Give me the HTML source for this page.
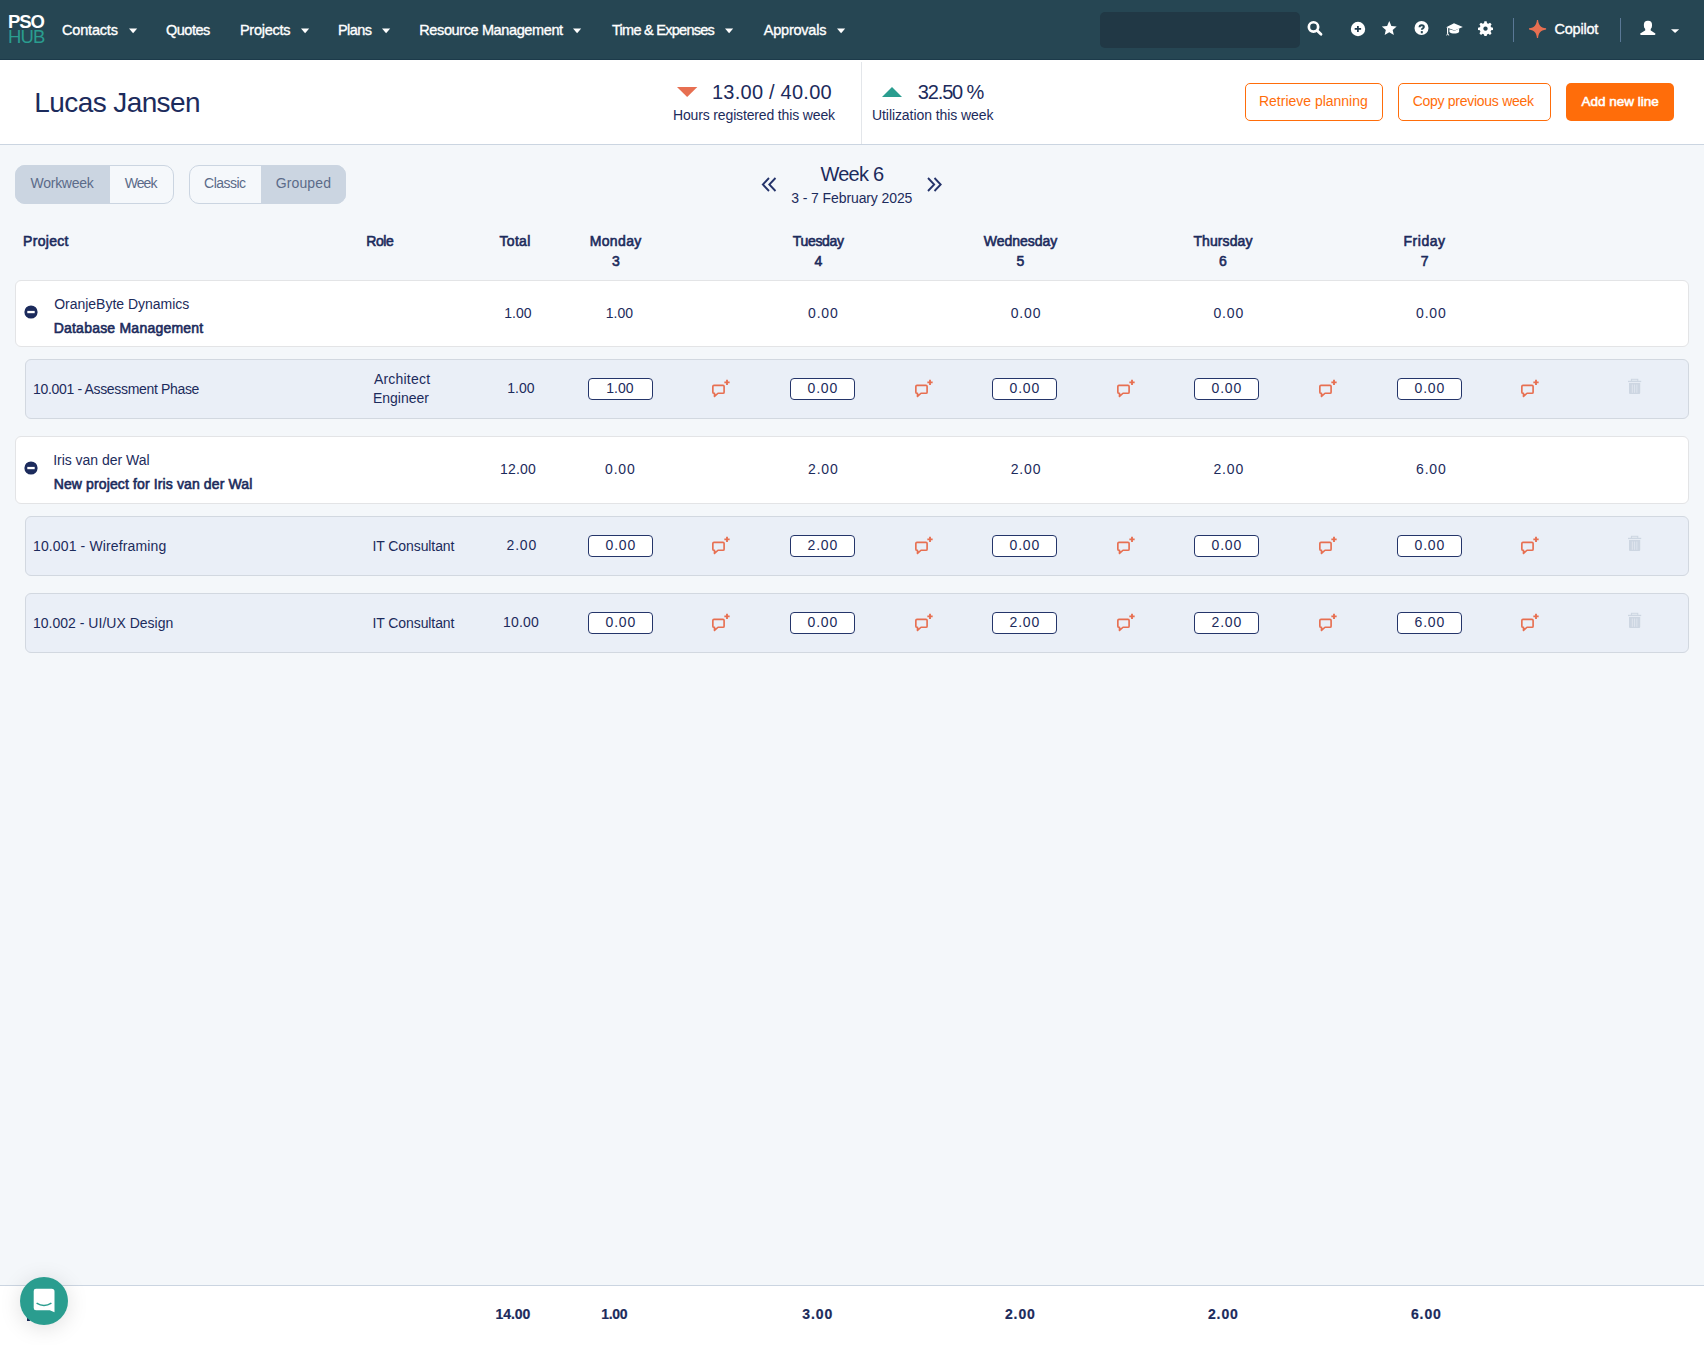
<!DOCTYPE html>
<html><head><meta charset="utf-8"><title>PSO Hub - Timesheet</title>
<style>
html,body{margin:0;padding:0;}
body{width:1704px;height:1345px;position:relative;overflow:hidden;background:#f4f7fa;font-family:"Liberation Sans", sans-serif;}
.t{position:absolute;white-space:nowrap;}
.r{position:absolute;}
svg.r{overflow:visible;}
</style></head><body>
<div class="r" style="left:0px;top:0px;width:1704px;height:59px;background:#264653;"></div>
<div class="r" style="left:0px;top:59px;width:1704px;height:1px;background:#1c3a4a;"></div>
<div class="t" style="left:7.90px;top:13.25px;font-size:18.5px;line-height:18.5px;font-weight:700;color:#ffffff;letter-spacing:-0.989px;">PSO</div>
<div class="t" style="left:7.90px;top:28.45px;font-size:18.5px;line-height:18.5px;font-weight:400;color:#2a9d8f;letter-spacing:-0.810px;">HUB</div>
<div class="t" style="left:61.98px;top:23.15px;font-size:14.5px;line-height:14.5px;font-weight:400;color:#ffffff;letter-spacing:-0.176px;-webkit-text-stroke:0.35px #fff;">Contacts</div>
<svg class="r" style="left:128.6px;top:27.5px" width="9" height="6"><path d="M0 0.5 L8.2 0.5 L4.1 5.3 Z" fill="#fff"/></svg>
<div class="t" style="left:165.98px;top:23.15px;font-size:14.5px;line-height:14.5px;font-weight:400;color:#ffffff;letter-spacing:-0.492px;-webkit-text-stroke:0.35px #fff;">Quotes</div>
<div class="t" style="left:239.88px;top:23.15px;font-size:14.5px;line-height:14.5px;font-weight:400;color:#ffffff;letter-spacing:-0.241px;-webkit-text-stroke:0.35px #fff;">Projects</div>
<svg class="r" style="left:301px;top:27.5px" width="9" height="6"><path d="M0 0.5 L8.2 0.5 L4.1 5.3 Z" fill="#fff"/></svg>
<div class="t" style="left:337.98px;top:23.15px;font-size:14.5px;line-height:14.5px;font-weight:400;color:#ffffff;letter-spacing:-0.570px;-webkit-text-stroke:0.35px #fff;">Plans</div>
<svg class="r" style="left:382px;top:27.5px" width="9" height="6"><path d="M0 0.5 L8.2 0.5 L4.1 5.3 Z" fill="#fff"/></svg>
<div class="t" style="left:419.28px;top:23.15px;font-size:14.5px;line-height:14.5px;font-weight:400;color:#ffffff;letter-spacing:-0.381px;-webkit-text-stroke:0.35px #fff;">Resource Management</div>
<svg class="r" style="left:572.9px;top:27.5px" width="9" height="6"><path d="M0 0.5 L8.2 0.5 L4.1 5.3 Z" fill="#fff"/></svg>
<div class="t" style="left:611.98px;top:23.15px;font-size:14.5px;line-height:14.5px;font-weight:400;color:#ffffff;letter-spacing:-0.729px;-webkit-text-stroke:0.35px #fff;">Time &amp; Expenses</div>
<svg class="r" style="left:725.4px;top:27.5px" width="9" height="6"><path d="M0 0.5 L8.2 0.5 L4.1 5.3 Z" fill="#fff"/></svg>
<div class="t" style="left:763.78px;top:23.15px;font-size:14.5px;line-height:14.5px;font-weight:400;color:#ffffff;letter-spacing:-0.224px;-webkit-text-stroke:0.35px #fff;">Approvals</div>
<svg class="r" style="left:837px;top:27.5px" width="9" height="6"><path d="M0 0.5 L8.2 0.5 L4.1 5.3 Z" fill="#fff"/></svg>
<div class="r" style="left:1100px;top:12px;width:200px;height:35.6px;background:#213845;border-radius:5px;"></div>
<svg class="r" style="left:1305px;top:19px" width="20" height="19" viewBox="0 0 20 19"><circle cx="8.5" cy="7.9" r="4.65" fill="none" stroke="#fff" stroke-width="2.7"/><path d="M12.1 11.5 L16.0 15.3" stroke="#fff" stroke-width="2.8" stroke-linecap="round"/></svg>
<svg class="r" style="left:1350px;top:21px" width="16" height="16" viewBox="0 0 16 16"><circle cx="8" cy="8" r="7.2" fill="#fff"/><path d="M7.9 4.9 V11 M4.7 7.95 H11.1" stroke="#1f3a4c" stroke-width="1.75"/></svg>
<svg class="r" style="left:1381.2px;top:20.3px" width="16.5" height="16" viewBox="0 0 24 23.3"><path d="M12 1.5 L15.1 8.6 L22.8 9.3 L17 14.4 L18.7 22 L12 18 L5.3 22 L7 14.4 L1.2 9.3 L8.9 8.6 Z" fill="#fff"/></svg>
<svg class="r" style="left:1414px;top:20.5px" width="16" height="15" viewBox="0 0 16 15"><circle cx="7.5" cy="7" r="7" fill="#fff"/><path d="M5.5 6.3 C5.5 4.9 6.4 4.2 7.7 4.2 C9.1 4.2 9.9 5 9.9 6 C9.9 7.3 7.9 7.4 7.8 8.7" fill="none" stroke="#264653" stroke-width="1.9"/><rect x="6.8" y="10.1" width="2" height="2.2" fill="#264653"/></svg>
<svg class="r" style="left:1446px;top:22.5px" width="17" height="13" viewBox="0 0 17 13"><path d="M0.2 4.3 L8 0.3 L16.8 3.9 L8.6 7.6 Z" fill="#fff"/><path d="M3.4 6.2 L3.4 9 C5.5 11 11 11 13.1 9 L13.1 5.6 L8.6 7.8 Z" fill="#fff"/><path d="M1.6 4.8 L1.6 10.2" stroke="#fff" stroke-width="1.2"/><path d="M0.2 12.5 L1.6 9.6 L3.4 12.5 L2.4 12.5 L1.6 11.2 L1.0 12.5 Z" fill="#fff"/></svg>
<svg class="r" style="left:1478px;top:20.5px" width="15" height="15" viewBox="0 0 16 16"><path fill="#fff" fill-rule="evenodd" d="M6.8 0.3 H9.2 L9.6 2.3 L11.1 2.9 L12.8 1.8 L14.5 3.5 L13.4 5.2 L14 6.7 L16 7.1 V9.5 L14 9.9 L13.4 11.4 L14.5 13.1 L12.8 14.8 L11.1 13.7 L9.6 14.3 L9.2 16 H6.8 L6.4 14.3 L4.9 13.7 L3.2 14.8 L1.5 13.1 L2.6 11.4 L2 9.9 L0 9.5 V7.1 L2 6.7 L2.6 5.2 L1.5 3.5 L3.2 1.8 L4.9 2.9 L6.4 2.3 Z M8 5.9 A2.3 2.3 0 1 0 8.001 5.9 Z"/></svg>
<div class="r" style="left:1513px;top:18px;width:1.3px;height:24px;background:#5a7896;"></div>
<div class="r" style="left:1620px;top:18px;width:1.3px;height:24px;background:#5a7896;"></div>
<svg class="r" style="left:1529px;top:20px" width="18" height="19" viewBox="0 0 18 19"><path d="M7.95 0 L9.05 0 C9.6 5 11.3 7.5 17.1 8.35 L17.1 9.45 C11.3 10.3 9.6 12.9 9.05 17.9 L7.95 17.9 C7.4 12.9 5.7 10.3 0 9.45 L0 8.35 C5.7 7.5 7.4 5 7.95 0 Z" fill="#e76f51"/></svg>
<div class="t" style="left:1554.48px;top:21.75px;font-size:14.5px;line-height:14.5px;font-weight:400;color:#ffffff;letter-spacing:-0.211px;-webkit-text-stroke:0.35px #fff;">Copilot</div>
<svg class="r" style="left:1640px;top:21px" width="16" height="14" viewBox="0 0 16 14"><rect x="3.9" y="-0.3" width="8.1" height="8.9" rx="3.8" fill="#fff"/><rect x="5.2" y="7" width="5.5" height="3" fill="#fff"/><path d="M0.2 12.6 L5.1 9.4 L10.8 9.4 L15.4 12.6 Q15.7 14 14.6 14 L1 14 Q-0.1 14 0.2 12.6 Z" fill="#fff"/></svg>
<svg class="r" style="left:1670.8px;top:29.2px" width="9" height="5"><path d="M0 0.2 L8.2 0.2 L4.1 3.9 Z" fill="#fff"/></svg>
<div class="r" style="left:0px;top:60px;width:1704px;height:84px;background:#ffffff;"></div>
<div class="r" style="left:0px;top:144px;width:1704px;height:1px;background:#cbd5e1;"></div>
<div class="t" style="left:34.30px;top:88.50px;font-size:28px;line-height:28px;font-weight:400;color:#1c2b5c;letter-spacing:-0.592px;">Lucas Jansen</div>
<svg class="r" style="left:677px;top:87px" width="21" height="11"><path d="M0 0 L20.3 0 L10.15 10 Z" fill="#e76f51"/></svg>
<div class="t" style="left:712.00px;top:82.00px;font-size:20px;line-height:20px;font-weight:400;color:#1c2b5c;letter-spacing:0.238px;">13.00 / 40.00</div>
<div class="t" style="left:673.00px;top:108.00px;font-size:14px;line-height:14px;font-weight:400;color:#1c2b5c;letter-spacing:-0.149px;">Hours registered this week</div>
<div class="r" style="left:860.5px;top:62px;width:1.2px;height:82px;background:#e3e6ea;"></div>
<svg class="r" style="left:882px;top:87px" width="21" height="11"><path d="M0 10 L20 10 L10 0 Z" fill="#2a9d8f"/></svg>
<div class="t" style="left:917.80px;top:82.00px;font-size:20px;line-height:20px;font-weight:400;color:#1c2b5c;letter-spacing:-1.151px;">32.50 %</div>
<div class="t" style="left:872.00px;top:108.00px;font-size:14px;line-height:14px;font-weight:400;color:#1c2b5c;letter-spacing:-0.077px;">Utilization this week</div>
<div class="r" style="left:1245px;top:83px;width:138px;height:37.5px;box-sizing:border-box;border:1.3px solid #ff6d0a;border-radius:5px;background:#fff;"></div>
<div class="t" style="left:1259.00px;top:94.20px;font-size:14px;line-height:14px;font-weight:400;color:#ff6d0a;letter-spacing:-0.011px;">Retrieve planning</div>
<div class="r" style="left:1398px;top:83px;width:153px;height:37.5px;box-sizing:border-box;border:1.3px solid #ff6d0a;border-radius:5px;background:#fff;"></div>
<div class="t" style="left:1412.70px;top:94.20px;font-size:14px;line-height:14px;font-weight:400;color:#ff6d0a;letter-spacing:-0.280px;">Copy previous week</div>
<div class="r" style="left:1566px;top:83px;width:108px;height:37.5px;border-radius:5px;background:#ff6d0a;"></div>
<div class="t" style="left:1581.44px;top:94.95px;font-size:13.5px;line-height:13.5px;font-weight:400;color:#ffffff;letter-spacing:-0.007px;-webkit-text-stroke:0.55px #fff;">Add new line</div>
<div class="r" style="left:15px;top:165px;width:159px;height:38.7px;box-sizing:border-box;border:1.2px solid #cbd5e1;border-radius:10px;background:#f5f8fb;"></div>
<div class="r" style="left:15px;top:165px;width:95px;height:38.7px;background:#cbd5e1;border-radius:10px 0 0 10px;"></div>
<div class="t" style="left:30.60px;top:176.40px;font-size:14px;line-height:14px;font-weight:400;color:#5b6b89;letter-spacing:-0.285px;">Workweek</div>
<div class="t" style="left:124.70px;top:176.40px;font-size:14px;line-height:14px;font-weight:400;color:#5b6b89;letter-spacing:-0.911px;">Week</div>
<div class="r" style="left:189px;top:165px;width:157px;height:38.7px;box-sizing:border-box;border:1.2px solid #cbd5e1;border-radius:10px;background:#f5f8fb;"></div>
<div class="r" style="left:261px;top:165px;width:85px;height:38.7px;background:#cbd5e1;border-radius:0 10px 10px 0;"></div>
<div class="t" style="left:204.10px;top:176.40px;font-size:14px;line-height:14px;font-weight:400;color:#5b6b89;letter-spacing:-0.520px;">Classic</div>
<div class="t" style="left:275.70px;top:176.40px;font-size:14px;line-height:14px;font-weight:400;color:#5b6b89;letter-spacing:0.134px;">Grouped</div>
<svg class="r" style="left:761.3px;top:176.6px" width="17" height="16" viewBox="0 0 17 16"><path d="M8 1 L1.8 7.5 L8 14 M14.5 1 L8.3 7.5 L14.5 14" fill="none" stroke="#24336a" stroke-width="1.85"/></svg>
<svg class="r" style="left:925.9px;top:176.6px" width="17" height="16" viewBox="0 0 17 16"><path d="M2 1 L8.2 7.5 L2 14 M8.5 1 L14.7 7.5 L8.5 14" fill="none" stroke="#24336a" stroke-width="1.85"/></svg>
<div class="t" style="left:820.40px;top:163.60px;font-size:20px;line-height:20px;font-weight:400;color:#1c2b5c;letter-spacing:-0.744px;">Week 6</div>
<div class="t" style="left:791.30px;top:190.90px;font-size:14px;line-height:14px;font-weight:400;color:#1c2b5c;letter-spacing:-0.104px;">3 - 7 February 2025</div>
<div class="t" style="left:23.08px;top:234.00px;font-size:14px;line-height:14px;font-weight:400;color:#1c2b5c;letter-spacing:0.293px;-webkit-text-stroke:0.6px #1c2b5c;">Project</div>
<div class="t" style="left:366.18px;top:234.00px;font-size:14px;line-height:14px;font-weight:400;color:#1c2b5c;letter-spacing:-0.389px;-webkit-text-stroke:0.6px #1c2b5c;">Role</div>
<div class="t" style="left:499.48px;top:234.00px;font-size:14px;line-height:14px;font-weight:400;color:#1c2b5c;letter-spacing:0.320px;-webkit-text-stroke:0.6px #1c2b5c;">Total</div>
<div class="t" style="left:589.63px;top:234.00px;font-size:14px;line-height:14px;font-weight:400;color:#1c2b5c;letter-spacing:0.387px;-webkit-text-stroke:0.6px #1c2b5c;">Monday</div>
<div class="t" style="left:612.00px;top:254.00px;font-size:14px;line-height:14px;font-weight:400;color:#1c2b5c;-webkit-text-stroke:0.6px #1c2b5c;">3</div>
<div class="t" style="left:792.78px;top:234.00px;font-size:14px;line-height:14px;font-weight:400;color:#1c2b5c;letter-spacing:-0.323px;-webkit-text-stroke:0.6px #1c2b5c;">Tuesday</div>
<div class="t" style="left:814.40px;top:254.00px;font-size:14px;line-height:14px;font-weight:400;color:#1c2b5c;-webkit-text-stroke:0.6px #1c2b5c;">4</div>
<div class="t" style="left:983.83px;top:234.00px;font-size:14px;line-height:14px;font-weight:400;color:#1c2b5c;letter-spacing:-0.042px;-webkit-text-stroke:0.6px #1c2b5c;">Wednesday</div>
<div class="t" style="left:1016.50px;top:254.00px;font-size:14px;line-height:14px;font-weight:400;color:#1c2b5c;-webkit-text-stroke:0.6px #1c2b5c;">5</div>
<div class="t" style="left:1193.38px;top:234.00px;font-size:14px;line-height:14px;font-weight:400;color:#1c2b5c;letter-spacing:0.097px;-webkit-text-stroke:0.6px #1c2b5c;">Thursday</div>
<div class="t" style="left:1218.90px;top:254.00px;font-size:14px;line-height:14px;font-weight:400;color:#1c2b5c;-webkit-text-stroke:0.6px #1c2b5c;">6</div>
<div class="t" style="left:1403.48px;top:234.00px;font-size:14px;line-height:14px;font-weight:400;color:#1c2b5c;letter-spacing:0.549px;-webkit-text-stroke:0.6px #1c2b5c;">Friday</div>
<div class="t" style="left:1420.80px;top:254.00px;font-size:14px;line-height:14px;font-weight:400;color:#1c2b5c;-webkit-text-stroke:0.6px #1c2b5c;">7</div>
<div class="r" style="left:15px;top:280px;width:1674px;height:67px;box-sizing:border-box;border:1px solid #e3e4e6;border-radius:6px;background:#fff;"></div>
<svg class="r" style="left:24px;top:304.8px" width="14" height="14" viewBox="0 0 14 14"><circle cx="7" cy="7" r="6.6" fill="#1c2b5c"/><rect x="3.3" y="5.9" width="7.4" height="2.3" fill="#fff"/></svg>
<div class="t" style="left:54.20px;top:296.50px;font-size:14px;line-height:14px;font-weight:400;color:#1c2b5c;letter-spacing:-0.015px;">OranjeByte Dynamics</div>
<div class="t" style="left:53.68px;top:321.20px;font-size:14px;line-height:14px;font-weight:400;color:#1c2b5c;letter-spacing:0.222px;-webkit-text-stroke:0.6px #1c2b5c;">Database Management</div>
<div class="t" style="left:504.35px;top:306.00px;font-size:14px;line-height:14px;font-weight:400;color:#1c2b5c;letter-spacing:-0.054px;">1.00</div>
<div class="t" style="left:605.85px;top:306.00px;font-size:14px;line-height:14px;font-weight:400;color:#1c2b5c;letter-spacing:-0.054px;">1.00</div>
<div class="t" style="left:808.00px;top:306.00px;font-size:14px;line-height:14px;font-weight:400;color:#1c2b5c;letter-spacing:0.846px;">0.00</div>
<div class="t" style="left:1010.70px;top:306.00px;font-size:14px;line-height:14px;font-weight:400;color:#1c2b5c;letter-spacing:0.846px;">0.00</div>
<div class="t" style="left:1213.40px;top:306.00px;font-size:14px;line-height:14px;font-weight:400;color:#1c2b5c;letter-spacing:0.846px;">0.00</div>
<div class="t" style="left:1416.00px;top:306.00px;font-size:14px;line-height:14px;font-weight:400;color:#1c2b5c;letter-spacing:0.846px;">0.00</div>
<div class="r" style="left:25px;top:359px;width:1664px;height:60px;box-sizing:border-box;border:1px solid #d2d8e0;border-radius:6px;background:#eaeff7;"></div>
<div class="t" style="left:33.00px;top:381.60px;font-size:14px;line-height:14px;font-weight:400;color:#1c2b5c;letter-spacing:-0.330px;">10.001 - Assessment Phase</div>
<div class="t" style="left:373.90px;top:371.80px;font-size:14px;line-height:14px;font-weight:400;color:#1c2b5c;letter-spacing:0.216px;">Architect</div>
<div class="t" style="left:372.90px;top:390.80px;font-size:14px;line-height:14px;font-weight:400;color:#1c2b5c;">Engineer</div>
<div class="t" style="left:507.35px;top:380.90px;font-size:14px;line-height:14px;font-weight:400;color:#1c2b5c;letter-spacing:-0.054px;">1.00</div>
<div class="r" style="left:588px;top:378px;width:65px;height:22px;box-sizing:border-box;border:1.3px solid #24356a;border-radius:4px;background:#fff;"></div>
<div class="t" style="left:606.35px;top:380.90px;font-size:14px;line-height:14px;font-weight:400;color:#1c2b5c;letter-spacing:-0.054px;">1.00</div>
<svg class="r" style="left:712px;top:378.5px" width="20" height="19" viewBox="0 0 20 19"><path d="M2 6.4 H11 Q12.1 6.4 12.1 7.5 V13.2 Q12.1 14.25 11 14.25 H6 L2.5 17.4 L2.5 14.25 H2 Q0.85 14.25 0.85 13.2 V7.5 Q0.85 6.4 2 6.4 Z" fill="none" stroke="#e76f51" stroke-width="1.65" stroke-linejoin="round"/><path d="M15 0.75 V6.05 M12.35 3.4 H17.65" stroke="#e76f51" stroke-width="1.85"/></svg>
<div class="r" style="left:790px;top:378px;width:65px;height:22px;box-sizing:border-box;border:1.3px solid #24356a;border-radius:4px;background:#fff;"></div>
<div class="t" style="left:807.50px;top:380.90px;font-size:14px;line-height:14px;font-weight:400;color:#1c2b5c;letter-spacing:0.846px;">0.00</div>
<svg class="r" style="left:915px;top:378.5px" width="20" height="19" viewBox="0 0 20 19"><path d="M2 6.4 H11 Q12.1 6.4 12.1 7.5 V13.2 Q12.1 14.25 11 14.25 H6 L2.5 17.4 L2.5 14.25 H2 Q0.85 14.25 0.85 13.2 V7.5 Q0.85 6.4 2 6.4 Z" fill="none" stroke="#e76f51" stroke-width="1.65" stroke-linejoin="round"/><path d="M15 0.75 V6.05 M12.35 3.4 H17.65" stroke="#e76f51" stroke-width="1.85"/></svg>
<div class="r" style="left:992px;top:378px;width:65px;height:22px;box-sizing:border-box;border:1.3px solid #24356a;border-radius:4px;background:#fff;"></div>
<div class="t" style="left:1009.50px;top:380.90px;font-size:14px;line-height:14px;font-weight:400;color:#1c2b5c;letter-spacing:0.846px;">0.00</div>
<svg class="r" style="left:1117px;top:378.5px" width="20" height="19" viewBox="0 0 20 19"><path d="M2 6.4 H11 Q12.1 6.4 12.1 7.5 V13.2 Q12.1 14.25 11 14.25 H6 L2.5 17.4 L2.5 14.25 H2 Q0.85 14.25 0.85 13.2 V7.5 Q0.85 6.4 2 6.4 Z" fill="none" stroke="#e76f51" stroke-width="1.65" stroke-linejoin="round"/><path d="M15 0.75 V6.05 M12.35 3.4 H17.65" stroke="#e76f51" stroke-width="1.85"/></svg>
<div class="r" style="left:1194px;top:378px;width:65px;height:22px;box-sizing:border-box;border:1.3px solid #24356a;border-radius:4px;background:#fff;"></div>
<div class="t" style="left:1211.50px;top:380.90px;font-size:14px;line-height:14px;font-weight:400;color:#1c2b5c;letter-spacing:0.846px;">0.00</div>
<svg class="r" style="left:1319px;top:378.5px" width="20" height="19" viewBox="0 0 20 19"><path d="M2 6.4 H11 Q12.1 6.4 12.1 7.5 V13.2 Q12.1 14.25 11 14.25 H6 L2.5 17.4 L2.5 14.25 H2 Q0.85 14.25 0.85 13.2 V7.5 Q0.85 6.4 2 6.4 Z" fill="none" stroke="#e76f51" stroke-width="1.65" stroke-linejoin="round"/><path d="M15 0.75 V6.05 M12.35 3.4 H17.65" stroke="#e76f51" stroke-width="1.85"/></svg>
<div class="r" style="left:1397px;top:378px;width:65px;height:22px;box-sizing:border-box;border:1.3px solid #24356a;border-radius:4px;background:#fff;"></div>
<div class="t" style="left:1414.50px;top:380.90px;font-size:14px;line-height:14px;font-weight:400;color:#1c2b5c;letter-spacing:0.846px;">0.00</div>
<svg class="r" style="left:1521px;top:378.5px" width="20" height="19" viewBox="0 0 20 19"><path d="M2 6.4 H11 Q12.1 6.4 12.1 7.5 V13.2 Q12.1 14.25 11 14.25 H6 L2.5 17.4 L2.5 14.25 H2 Q0.85 14.25 0.85 13.2 V7.5 Q0.85 6.4 2 6.4 Z" fill="none" stroke="#e76f51" stroke-width="1.65" stroke-linejoin="round"/><path d="M15 0.75 V6.05 M12.35 3.4 H17.65" stroke="#e76f51" stroke-width="1.85"/></svg>
<svg class="r" style="left:1627.5px;top:378.5px" width="14" height="16" viewBox="0 0 14 16"><rect x="3.4" y="0.3" width="6.4" height="2" fill="none" stroke="#cdd6e2" stroke-width="1"/><rect x="0" y="1.8" width="13.2" height="1.3" fill="#cdd6e2"/><path d="M1 4 H12.2 V14 Q12.2 15 11.2 15 H2 Q1 15 1 14 Z" fill="#cdd6e2"/><path d="M4.3 5.5 V13.8 M6.6 5.5 V13.8 M8.9 5.5 V13.8" stroke="#e4e9f1" stroke-width="0.8"/></svg>
<div class="r" style="left:15px;top:436px;width:1674px;height:68px;box-sizing:border-box;border:1px solid #e3e4e6;border-radius:6px;background:#fff;"></div>
<svg class="r" style="left:24px;top:460.8px" width="14" height="14" viewBox="0 0 14 14"><circle cx="7" cy="7" r="6.6" fill="#1c2b5c"/><rect x="3.3" y="5.9" width="7.4" height="2.3" fill="#fff"/></svg>
<div class="t" style="left:53.20px;top:452.50px;font-size:14px;line-height:14px;font-weight:400;color:#1c2b5c;letter-spacing:-0.028px;">Iris van der Wal</div>
<div class="t" style="left:53.68px;top:477.20px;font-size:14px;line-height:14px;font-weight:400;color:#1c2b5c;letter-spacing:0.125px;-webkit-text-stroke:0.6px #1c2b5c;">New project for Iris van der Wal</div>
<div class="t" style="left:500.00px;top:462.00px;font-size:14px;line-height:14px;font-weight:400;color:#1c2b5c;letter-spacing:0.188px;">12.00</div>
<div class="t" style="left:605.00px;top:462.00px;font-size:14px;line-height:14px;font-weight:400;color:#1c2b5c;letter-spacing:0.846px;">0.00</div>
<div class="t" style="left:808.00px;top:462.00px;font-size:14px;line-height:14px;font-weight:400;color:#1c2b5c;letter-spacing:0.846px;">2.00</div>
<div class="t" style="left:1010.70px;top:462.00px;font-size:14px;line-height:14px;font-weight:400;color:#1c2b5c;letter-spacing:0.846px;">2.00</div>
<div class="t" style="left:1213.40px;top:462.00px;font-size:14px;line-height:14px;font-weight:400;color:#1c2b5c;letter-spacing:0.846px;">2.00</div>
<div class="t" style="left:1416.00px;top:462.00px;font-size:14px;line-height:14px;font-weight:400;color:#1c2b5c;letter-spacing:0.846px;">6.00</div>
<div class="r" style="left:25px;top:516px;width:1664px;height:60px;box-sizing:border-box;border:1px solid #d2d8e0;border-radius:6px;background:#eaeff7;"></div>
<div class="t" style="left:33.00px;top:538.60px;font-size:14px;line-height:14px;font-weight:400;color:#1c2b5c;letter-spacing:0.130px;">10.001 - Wireframing</div>
<div class="t" style="left:372.50px;top:538.60px;font-size:14px;line-height:14px;font-weight:400;color:#1c2b5c;letter-spacing:-0.089px;">IT Consultant</div>
<div class="t" style="left:506.50px;top:537.90px;font-size:14px;line-height:14px;font-weight:400;color:#1c2b5c;letter-spacing:0.846px;">2.00</div>
<div class="r" style="left:588px;top:535px;width:65px;height:22px;box-sizing:border-box;border:1.3px solid #24356a;border-radius:4px;background:#fff;"></div>
<div class="t" style="left:605.50px;top:537.90px;font-size:14px;line-height:14px;font-weight:400;color:#1c2b5c;letter-spacing:0.846px;">0.00</div>
<svg class="r" style="left:712px;top:535.5px" width="20" height="19" viewBox="0 0 20 19"><path d="M2 6.4 H11 Q12.1 6.4 12.1 7.5 V13.2 Q12.1 14.25 11 14.25 H6 L2.5 17.4 L2.5 14.25 H2 Q0.85 14.25 0.85 13.2 V7.5 Q0.85 6.4 2 6.4 Z" fill="none" stroke="#e76f51" stroke-width="1.65" stroke-linejoin="round"/><path d="M15 0.75 V6.05 M12.35 3.4 H17.65" stroke="#e76f51" stroke-width="1.85"/></svg>
<div class="r" style="left:790px;top:535px;width:65px;height:22px;box-sizing:border-box;border:1.3px solid #24356a;border-radius:4px;background:#fff;"></div>
<div class="t" style="left:807.50px;top:537.90px;font-size:14px;line-height:14px;font-weight:400;color:#1c2b5c;letter-spacing:0.846px;">2.00</div>
<svg class="r" style="left:915px;top:535.5px" width="20" height="19" viewBox="0 0 20 19"><path d="M2 6.4 H11 Q12.1 6.4 12.1 7.5 V13.2 Q12.1 14.25 11 14.25 H6 L2.5 17.4 L2.5 14.25 H2 Q0.85 14.25 0.85 13.2 V7.5 Q0.85 6.4 2 6.4 Z" fill="none" stroke="#e76f51" stroke-width="1.65" stroke-linejoin="round"/><path d="M15 0.75 V6.05 M12.35 3.4 H17.65" stroke="#e76f51" stroke-width="1.85"/></svg>
<div class="r" style="left:992px;top:535px;width:65px;height:22px;box-sizing:border-box;border:1.3px solid #24356a;border-radius:4px;background:#fff;"></div>
<div class="t" style="left:1009.50px;top:537.90px;font-size:14px;line-height:14px;font-weight:400;color:#1c2b5c;letter-spacing:0.846px;">0.00</div>
<svg class="r" style="left:1117px;top:535.5px" width="20" height="19" viewBox="0 0 20 19"><path d="M2 6.4 H11 Q12.1 6.4 12.1 7.5 V13.2 Q12.1 14.25 11 14.25 H6 L2.5 17.4 L2.5 14.25 H2 Q0.85 14.25 0.85 13.2 V7.5 Q0.85 6.4 2 6.4 Z" fill="none" stroke="#e76f51" stroke-width="1.65" stroke-linejoin="round"/><path d="M15 0.75 V6.05 M12.35 3.4 H17.65" stroke="#e76f51" stroke-width="1.85"/></svg>
<div class="r" style="left:1194px;top:535px;width:65px;height:22px;box-sizing:border-box;border:1.3px solid #24356a;border-radius:4px;background:#fff;"></div>
<div class="t" style="left:1211.50px;top:537.90px;font-size:14px;line-height:14px;font-weight:400;color:#1c2b5c;letter-spacing:0.846px;">0.00</div>
<svg class="r" style="left:1319px;top:535.5px" width="20" height="19" viewBox="0 0 20 19"><path d="M2 6.4 H11 Q12.1 6.4 12.1 7.5 V13.2 Q12.1 14.25 11 14.25 H6 L2.5 17.4 L2.5 14.25 H2 Q0.85 14.25 0.85 13.2 V7.5 Q0.85 6.4 2 6.4 Z" fill="none" stroke="#e76f51" stroke-width="1.65" stroke-linejoin="round"/><path d="M15 0.75 V6.05 M12.35 3.4 H17.65" stroke="#e76f51" stroke-width="1.85"/></svg>
<div class="r" style="left:1397px;top:535px;width:65px;height:22px;box-sizing:border-box;border:1.3px solid #24356a;border-radius:4px;background:#fff;"></div>
<div class="t" style="left:1414.50px;top:537.90px;font-size:14px;line-height:14px;font-weight:400;color:#1c2b5c;letter-spacing:0.846px;">0.00</div>
<svg class="r" style="left:1521px;top:535.5px" width="20" height="19" viewBox="0 0 20 19"><path d="M2 6.4 H11 Q12.1 6.4 12.1 7.5 V13.2 Q12.1 14.25 11 14.25 H6 L2.5 17.4 L2.5 14.25 H2 Q0.85 14.25 0.85 13.2 V7.5 Q0.85 6.4 2 6.4 Z" fill="none" stroke="#e76f51" stroke-width="1.65" stroke-linejoin="round"/><path d="M15 0.75 V6.05 M12.35 3.4 H17.65" stroke="#e76f51" stroke-width="1.85"/></svg>
<svg class="r" style="left:1627.5px;top:535.5px" width="14" height="16" viewBox="0 0 14 16"><rect x="3.4" y="0.3" width="6.4" height="2" fill="none" stroke="#cdd6e2" stroke-width="1"/><rect x="0" y="1.8" width="13.2" height="1.3" fill="#cdd6e2"/><path d="M1 4 H12.2 V14 Q12.2 15 11.2 15 H2 Q1 15 1 14 Z" fill="#cdd6e2"/><path d="M4.3 5.5 V13.8 M6.6 5.5 V13.8 M8.9 5.5 V13.8" stroke="#e4e9f1" stroke-width="0.8"/></svg>
<div class="r" style="left:25px;top:593px;width:1664px;height:60px;box-sizing:border-box;border:1px solid #d2d8e0;border-radius:6px;background:#eaeff7;"></div>
<div class="t" style="left:33.00px;top:615.60px;font-size:14px;line-height:14px;font-weight:400;color:#1c2b5c;letter-spacing:0.011px;">10.002 - UI/UX Design</div>
<div class="t" style="left:372.50px;top:615.60px;font-size:14px;line-height:14px;font-weight:400;color:#1c2b5c;letter-spacing:-0.089px;">IT Consultant</div>
<div class="t" style="left:503.00px;top:614.90px;font-size:14px;line-height:14px;font-weight:400;color:#1c2b5c;letter-spacing:0.188px;">10.00</div>
<div class="r" style="left:588px;top:612px;width:65px;height:22px;box-sizing:border-box;border:1.3px solid #24356a;border-radius:4px;background:#fff;"></div>
<div class="t" style="left:605.50px;top:614.90px;font-size:14px;line-height:14px;font-weight:400;color:#1c2b5c;letter-spacing:0.846px;">0.00</div>
<svg class="r" style="left:712px;top:612.5px" width="20" height="19" viewBox="0 0 20 19"><path d="M2 6.4 H11 Q12.1 6.4 12.1 7.5 V13.2 Q12.1 14.25 11 14.25 H6 L2.5 17.4 L2.5 14.25 H2 Q0.85 14.25 0.85 13.2 V7.5 Q0.85 6.4 2 6.4 Z" fill="none" stroke="#e76f51" stroke-width="1.65" stroke-linejoin="round"/><path d="M15 0.75 V6.05 M12.35 3.4 H17.65" stroke="#e76f51" stroke-width="1.85"/></svg>
<div class="r" style="left:790px;top:612px;width:65px;height:22px;box-sizing:border-box;border:1.3px solid #24356a;border-radius:4px;background:#fff;"></div>
<div class="t" style="left:807.50px;top:614.90px;font-size:14px;line-height:14px;font-weight:400;color:#1c2b5c;letter-spacing:0.846px;">0.00</div>
<svg class="r" style="left:915px;top:612.5px" width="20" height="19" viewBox="0 0 20 19"><path d="M2 6.4 H11 Q12.1 6.4 12.1 7.5 V13.2 Q12.1 14.25 11 14.25 H6 L2.5 17.4 L2.5 14.25 H2 Q0.85 14.25 0.85 13.2 V7.5 Q0.85 6.4 2 6.4 Z" fill="none" stroke="#e76f51" stroke-width="1.65" stroke-linejoin="round"/><path d="M15 0.75 V6.05 M12.35 3.4 H17.65" stroke="#e76f51" stroke-width="1.85"/></svg>
<div class="r" style="left:992px;top:612px;width:65px;height:22px;box-sizing:border-box;border:1.3px solid #24356a;border-radius:4px;background:#fff;"></div>
<div class="t" style="left:1009.50px;top:614.90px;font-size:14px;line-height:14px;font-weight:400;color:#1c2b5c;letter-spacing:0.846px;">2.00</div>
<svg class="r" style="left:1117px;top:612.5px" width="20" height="19" viewBox="0 0 20 19"><path d="M2 6.4 H11 Q12.1 6.4 12.1 7.5 V13.2 Q12.1 14.25 11 14.25 H6 L2.5 17.4 L2.5 14.25 H2 Q0.85 14.25 0.85 13.2 V7.5 Q0.85 6.4 2 6.4 Z" fill="none" stroke="#e76f51" stroke-width="1.65" stroke-linejoin="round"/><path d="M15 0.75 V6.05 M12.35 3.4 H17.65" stroke="#e76f51" stroke-width="1.85"/></svg>
<div class="r" style="left:1194px;top:612px;width:65px;height:22px;box-sizing:border-box;border:1.3px solid #24356a;border-radius:4px;background:#fff;"></div>
<div class="t" style="left:1211.50px;top:614.90px;font-size:14px;line-height:14px;font-weight:400;color:#1c2b5c;letter-spacing:0.846px;">2.00</div>
<svg class="r" style="left:1319px;top:612.5px" width="20" height="19" viewBox="0 0 20 19"><path d="M2 6.4 H11 Q12.1 6.4 12.1 7.5 V13.2 Q12.1 14.25 11 14.25 H6 L2.5 17.4 L2.5 14.25 H2 Q0.85 14.25 0.85 13.2 V7.5 Q0.85 6.4 2 6.4 Z" fill="none" stroke="#e76f51" stroke-width="1.65" stroke-linejoin="round"/><path d="M15 0.75 V6.05 M12.35 3.4 H17.65" stroke="#e76f51" stroke-width="1.85"/></svg>
<div class="r" style="left:1397px;top:612px;width:65px;height:22px;box-sizing:border-box;border:1.3px solid #24356a;border-radius:4px;background:#fff;"></div>
<div class="t" style="left:1414.50px;top:614.90px;font-size:14px;line-height:14px;font-weight:400;color:#1c2b5c;letter-spacing:0.846px;">6.00</div>
<svg class="r" style="left:1521px;top:612.5px" width="20" height="19" viewBox="0 0 20 19"><path d="M2 6.4 H11 Q12.1 6.4 12.1 7.5 V13.2 Q12.1 14.25 11 14.25 H6 L2.5 17.4 L2.5 14.25 H2 Q0.85 14.25 0.85 13.2 V7.5 Q0.85 6.4 2 6.4 Z" fill="none" stroke="#e76f51" stroke-width="1.65" stroke-linejoin="round"/><path d="M15 0.75 V6.05 M12.35 3.4 H17.65" stroke="#e76f51" stroke-width="1.85"/></svg>
<svg class="r" style="left:1627.5px;top:612.5px" width="14" height="16" viewBox="0 0 14 16"><rect x="3.4" y="0.3" width="6.4" height="2" fill="none" stroke="#cdd6e2" stroke-width="1"/><rect x="0" y="1.8" width="13.2" height="1.3" fill="#cdd6e2"/><path d="M1 4 H12.2 V14 Q12.2 15 11.2 15 H2 Q1 15 1 14 Z" fill="#cdd6e2"/><path d="M4.3 5.5 V13.8 M6.6 5.5 V13.8 M8.9 5.5 V13.8" stroke="#e4e9f1" stroke-width="0.8"/></svg>
<div class="r" style="left:0px;top:1285px;width:1704px;height:1px;background:#cbd5e1;"></div>
<div class="r" style="left:0px;top:1286px;width:1704px;height:59px;background:#fff;"></div>
<div class="t" style="left:495.41px;top:1307.00px;font-size:14px;line-height:14px;font-weight:700;color:#1c2b5c;letter-spacing:-0.017px;-webkit-text-stroke:0.2px #1c2b5c;">14.00</div>
<div class="t" style="left:601.26px;top:1307.00px;font-size:14px;line-height:14px;font-weight:700;color:#1c2b5c;letter-spacing:-0.327px;-webkit-text-stroke:0.2px #1c2b5c;">1.00</div>
<div class="t" style="left:802.31px;top:1307.00px;font-size:14px;line-height:14px;font-weight:700;color:#1c2b5c;letter-spacing:0.906px;-webkit-text-stroke:0.2px #1c2b5c;">3.00</div>
<div class="t" style="left:1004.91px;top:1307.00px;font-size:14px;line-height:14px;font-weight:700;color:#1c2b5c;letter-spacing:0.906px;-webkit-text-stroke:0.2px #1c2b5c;">2.00</div>
<div class="t" style="left:1207.91px;top:1307.00px;font-size:14px;line-height:14px;font-weight:700;color:#1c2b5c;letter-spacing:0.906px;-webkit-text-stroke:0.2px #1c2b5c;">2.00</div>
<div class="t" style="left:1410.91px;top:1307.00px;font-size:14px;line-height:14px;font-weight:700;color:#1c2b5c;letter-spacing:0.906px;-webkit-text-stroke:0.2px #1c2b5c;">6.00</div>
<div class="r" style="left:27px;top:1317.5px;width:2.6px;height:3px;background:#1c2b5c;"></div>
<div class="r" style="left:20px;top:1277px;width:48px;height:48px;border-radius:50%;background:#2a9d8f;box-shadow:0 3px 22px rgba(0,0,0,0.13);"></div>
<svg class="r" style="left:33px;top:1288px" width="23" height="26" viewBox="0 0 23 26"><path d="M3 0.8 H18.7 Q21.5 0.8 21.5 3.6 V24.2 L16.8 22.2 H3 Q0.7 22.2 0.7 19.9 V3.1 Q0.7 0.8 3 0.8 Z" fill="#fff"/><path d="M3.6 15.1 Q11 19.8 18.4 15.1" fill="none" stroke="#2a9d8f" stroke-width="1.5"/></svg>
</body></html>
